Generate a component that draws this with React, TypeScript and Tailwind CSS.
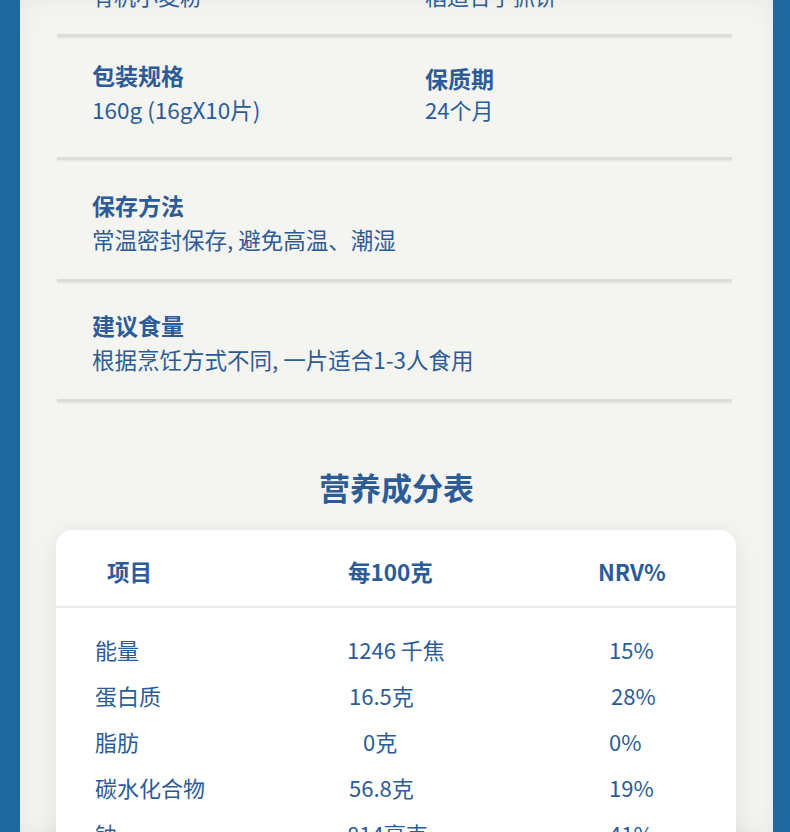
import React from "react";

const font = { fontFamily: '"Noto Sans CJK SC", "Noto Sans", sans-serif' };

function Divider() {
  return (
    <div className="ml-[37px] mr-[41px] h-[3px] bg-[#dcddd8] shadow-[0_1px_2px_rgba(0,0,0,0.08)]" />
  );
}

const rows: { name: string; val: string; nrv: string; vp: string; np: string }[] = [
  { name: "能量", val: "1246 千焦", nrv: "15%", vp: "pl-0", np: "pl-0" },
  { name: "蛋白质", val: "16.5克", nrv: "28%", vp: "pl-[2px]", np: "pl-[2px]" },
  { name: "脂肪", val: "0克", nrv: "0%", vp: "pl-[16px]", np: "pl-0" },
  { name: "碳水化合物", val: "56.8克", nrv: "19%", vp: "pl-[2px]", np: "pl-0" },
  { name: "钠", val: "814毫克", nrv: "41%", vp: "pl-0", np: "pl-0" },
];

export default function App() {
  return (
    <div className="w-[790px] h-[832px] overflow-hidden flex bg-[#1f68a0]" style={font}>
      <div className="w-[20px] shrink-0" />
      <div className="w-[753px] shrink-0 h-full overflow-hidden bg-[#f4f4f0] shadow-[inset_0_0_24px_rgba(0,0,0,0.05)] text-[#2c5c98]">
        {/* top cut block */}
        <div className="h-[34px] overflow-hidden">
          <div className="flex pl-[72px] -mt-[22px] text-[22px] leading-[34px]">
            <div className="w-[333px]">有机小麦粉</div>
            <div>稻适合手抓饼</div>
          </div>
        </div>
        <Divider />
        {/* section 1 */}
        <div className="h-[120px] pt-[21px] pl-[72px] flex">
          <div className="w-[333px]">
            <div className="text-[23px] leading-[34px] font-bold">包装规格</div>
            <div className="text-[22.5px] leading-[34px]">160g (16gX10片)</div>
          </div>
          <div className="pt-[4px]">
            <div className="text-[23px] leading-[32px] font-bold">保质期</div>
            <div className="text-[22px] leading-[30px]">24个月</div>
          </div>
        </div>
        <Divider />
        {/* section 2 */}
        <div className="h-[119px] pt-[28px] pl-[72px]">
          <div className="text-[23px] leading-[34px] font-bold">保存方法</div>
          <div className="text-[22.5px] leading-[34px]">常温密封保存, 避免高温、潮湿</div>
        </div>
        <Divider />
        {/* section 3 */}
        <div className="h-[117px] pt-[26px] pl-[72px]">
          <div className="text-[23px] leading-[34px] font-bold">建议食量</div>
          <div className="text-[22.5px] leading-[34px]">根据烹饪方式不同, 一片适合1-3人食用</div>
        </div>
        <Divider />
        {/* title */}
        <div className="pt-[64px] h-[128px] text-center text-[31px] leading-[42px] font-bold">
          营养成分表
        </div>
        {/* card */}
        <div className="ml-[36px] w-[680px] rounded-[16px] bg-white shadow-[0_4px_22px_rgba(0,0,0,0.09)] pb-[40px]">
          <div className="h-[76px] pt-[24px] pl-[51px] flex text-[22.5px] leading-[34px] font-bold">
            <div className="w-[241px]">项目</div>
            <div className="w-[250px]">每100克</div>
            <div>NRV%</div>
          </div>
          <div className="h-[2px] bg-[#ebebe9]" />
          <div className="pt-[18px] pl-[39px]">
            {rows.map((r) => (
              <div key={r.name} className="flex h-[46px] items-center text-[22px] leading-[46px]">
                <div className="w-[252px]">{r.name}</div>
                <div className={`w-[262px] ${r.vp}`}>{r.val}</div>
                <div className={r.np}>{r.nrv}</div>
              </div>
            ))}
          </div>
        </div>
      </div>
      <div className="flex-1" />
    </div>
  );
}
